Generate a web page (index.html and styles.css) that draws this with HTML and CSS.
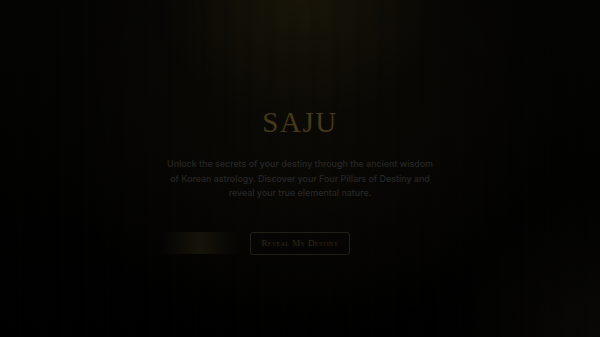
FILE: index.html
```html
<!DOCTYPE html>
<html>

<head>
    <meta http-equiv="Content-Type" content="text/html;charset=utf-8">
    <title>Saju</title>
    <link rel="stylesheet" href="styles.css">
</head>

<body>
    <div id="hero">
        <div class="streaks"></div>
        <div class="content">
            <h1 class="title">SAJU</h1>
            <p class="intro">Unlock the secrets of your destiny through the ancient wisdom of Korean astrology. Discover your Four Pillars of Destiny and reveal your true elemental nature.</p>
            <div class="actions">
                <div class="shimmer"></div>
                <button class="btn-outline">Reveal My Destiny</button>
            </div>
        </div>
    </div>
</body>

</html>
```

FILE: styles.css
```css
html,
body {
    margin: 0;
    height: 100%;
    background: #000;
    overflow: hidden;
}

#hero {
    position: relative;
    height: 100vh;
    background:
        radial-gradient(ellipse 140px 120px at 50% 0%, #191508 0%, #100e06 50%, rgba(10, 9, 4, 0) 100%),
        radial-gradient(ellipse 260px 240px at 50% 30%, #0c0a05 0%, rgba(6, 5, 3, 0) 100%),
        radial-gradient(ellipse 160px 150px at 100% 100%, #090806 0%, rgba(0, 0, 0, 0) 100%),
        linear-gradient(#040403, #000);
}

.streaks {
    position: absolute;
    inset: 0;
    background: repeating-linear-gradient(90deg, rgba(0, 0, 0, 0) 0px, rgba(0, 0, 0, 0.2) 6px, rgba(0, 0, 0, 0) 14px, rgba(30, 26, 12, 0.08) 22px);
    opacity: 0.4;
}

.content {
    position: relative;
    display: flex;
    flex-direction: column;
    align-items: center;
    padding-top: 104px;
}

.title {
    margin: 0;
    font-family: "Liberation Serif", "DejaVu Serif", serif;
    font-weight: normal;
    font-size: 29px;
    line-height: 36px;
    letter-spacing: 1.5px;
    color: #44391a;
}

.intro {
    margin: 17px 0 0;
    width: 270px;
    font-family: Inter, "Noto Sans", sans-serif;
    font-weight: 500;
    font-size: 8.9px;
    line-height: 14.6px;
    text-align: center;
    color: #272726;
}

.actions {
    display: flex;
    align-items: center;
    gap: 10px;
    margin-top: 31px;
    margin-left: -90px;
}

.shimmer {
    width: 80px;
    height: 22px;
    background: linear-gradient(90deg, rgba(20, 17, 8, 0) 0%, #0d0b06 25%, #161309 50%, #0d0b06 75%, rgba(20, 17, 8, 0) 100%);
}

.btn-outline {
    height: 23px;
    padding: 0 10px;
    background: transparent;
    border: 1px solid #221f17;
    border-radius: 3px;
    font-family: "Liberation Serif", "DejaVu Serif", serif;
    font-variant: small-caps;
    font-size: 9px;
    letter-spacing: 0.4px;
    color: #332b16;
}
```
